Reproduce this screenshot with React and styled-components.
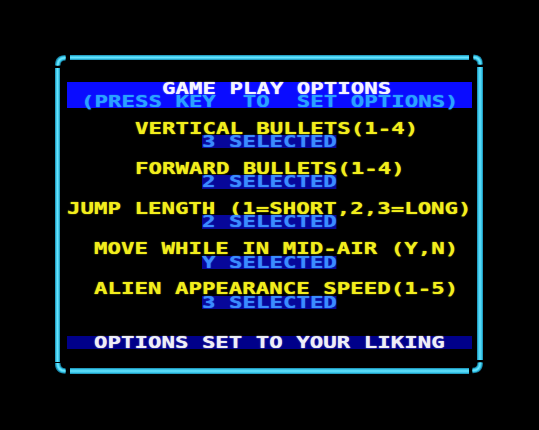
import React from 'react';
import styled, { createGlobalStyle } from 'styled-components';

const CELL = 13.5;
const ROW = 13.4;

const Global = createGlobalStyle`
  html, body { margin: 0; padding: 0; background: #000; }
  body { width: 539px; height: 430px; overflow: hidden; }
`;

const Screen = styled.div`
  width: 539px;
  height: 430px;
  box-sizing: border-box;
  background: #000;
  padding: 54px 0 0 55px;
`;

const Frame = styled.div`
  display: grid;
  grid-template-columns: 12px 405px 12px;
  grid-template-rows: 13px 295px 12px;
`;

const hGrad = `linear-gradient(to bottom, #1a86a8 0%, #36c4e8 22%, #66e2fc 50%, #36c4e8 78%, #1a86a8 100%)`;
const vGrad = `linear-gradient(to right, #1a86a8 0%, #36c4e8 22%, #66e2fc 50%, #36c4e8 78%, #1a86a8 100%)`;

const HEdge = styled.div`
  height: ${p => p.$h}px;
  margin: ${p => p.$top}px 3px 0;
  background: ${hGrad};
`;

const VEdge = styled.div`
  width: ${p => p.$w}px;
  margin: ${p => p.$top}px 0 ${p => p.$bottom}px ${p => p.$left}px;
  background: ${vGrad};
`;

const Corner = styled.svg`
  display: block;
  width: 12px;
  height: ${p => p.$h}px;
  overflow: visible;
`;

const Content = styled.div`
  padding-top: 14.5px;
  display: flex;
  flex-direction: column;
`;

const Bar = styled.div`
  background: ${p => p.$bg};
  margin-top: ${p => p.$gap * ROW}px;
`;

const Group = styled.div`
  margin-top: ${ROW}px;
`;

const Line = styled.div`
  height: ${ROW}px;
  line-height: ${ROW}px;
  padding-left: ${p => p.$col * CELL}px;
  white-space: pre;
  font-size: 0;
`;

const Text = styled.span`
  display: inline-block;
  vertical-align: top;
  height: ${ROW}px;
  font-family: "DejaVu Sans Mono", "Liberation Mono", monospace;
  font-weight: bold;
  font-size: 16px;
  line-height: 14.2px;
  color: ${p => p.$color};
  background: ${p => p.$bg || 'transparent'};
  transform: scaleX(1.4);
  transform-origin: 0 0;
  white-space: pre;
  text-shadow: 0 0 1px ${p => p.$color};
`;

const YELLOW = '#f2ee1c';
const SEL = '#3a8cff';
const SEL_BG = '#07079a';

const options = [
  { col: 5, label: 'VERTICAL BULLETS(1-4)', value: '3' },
  { col: 5, label: 'FORWARD BULLETS(1-4)', value: '2' },
  { col: 0, label: 'JUMP LENGTH (1=SHORT,2,3=LONG)', value: '2' },
  { col: 2, label: 'MOVE WHILE IN MID-AIR (Y,N)', value: 'Y' },
  { col: 2, label: 'ALIEN APPEARANCE SPEED(1-5)', value: '3' },
];

const Stroke = ({ d }) => (
  <>
    <path d={d} fill="none" stroke="#1a86a8" strokeWidth="5.5" />
    <path d={d} fill="none" stroke="#3accee" strokeWidth="3.5" />
    <path d={d} fill="none" stroke="#6ce4fc" strokeWidth="1.4" />
  </>
);

export default function App() {
  return (
    <Screen>
      <Global />
      <Frame>
        <Corner $h={13} viewBox="0 0 12 13">
          <Stroke d="M2.7 11.5 Q2.7 3.7 10.5 3.7" />
        </Corner>
        <HEdge $top={1} $h={5} />
        <Corner $h={13} viewBox="0 0 12 13">
          <Stroke d="M1.5 3.2 Q8.2 3.2 8.2 10.5" />
        </Corner>

        <VEdge $w={5} $top={1} $bottom={0} $left={0} />
        <Content>
          <Bar $bg="#0a0cff" $gap={0}>
            <Line $col={7}><Text $color="#f4f4ff">GAME PLAY OPTIONS</Text></Line>
            <Line $col={1}><Text $color="#2aa2ff">(PRESS KEY  TO  SET OPTIONS)</Text></Line>
          </Bar>
          {options.map(o => (
            <Group key={o.label}>
              <Line $col={o.col}><Text $color={YELLOW}>{o.label}</Text></Line>
              <Line $col={10}><Text $color={SEL} $bg={SEL_BG}>{`${o.value} SELECTED`}</Text></Line>
            </Group>
          ))}
          <Bar $bg="#00008a" $gap={2}>
            <Line $col={2}><Text $color="#eeeef6">OPTIONS SET TO YOUR LIKING</Text></Line>
          </Bar>
        </Content>
        <VEdge $w={6} $top={0} $bottom={2} $left={5} />

        <Corner $h={12} viewBox="0 0 12 12">
          <Stroke d="M2.7 1 Q2.7 9 10.5 9" />
        </Corner>
        <HEdge $top={6} $h={6} />
        <Corner $h={12} viewBox="0 0 12 12">
          <Stroke d="M0.5 8.5 Q8.2 8.5 8.2 0.5" />
        </Corner>
      </Frame>
    </Screen>
  );
}
